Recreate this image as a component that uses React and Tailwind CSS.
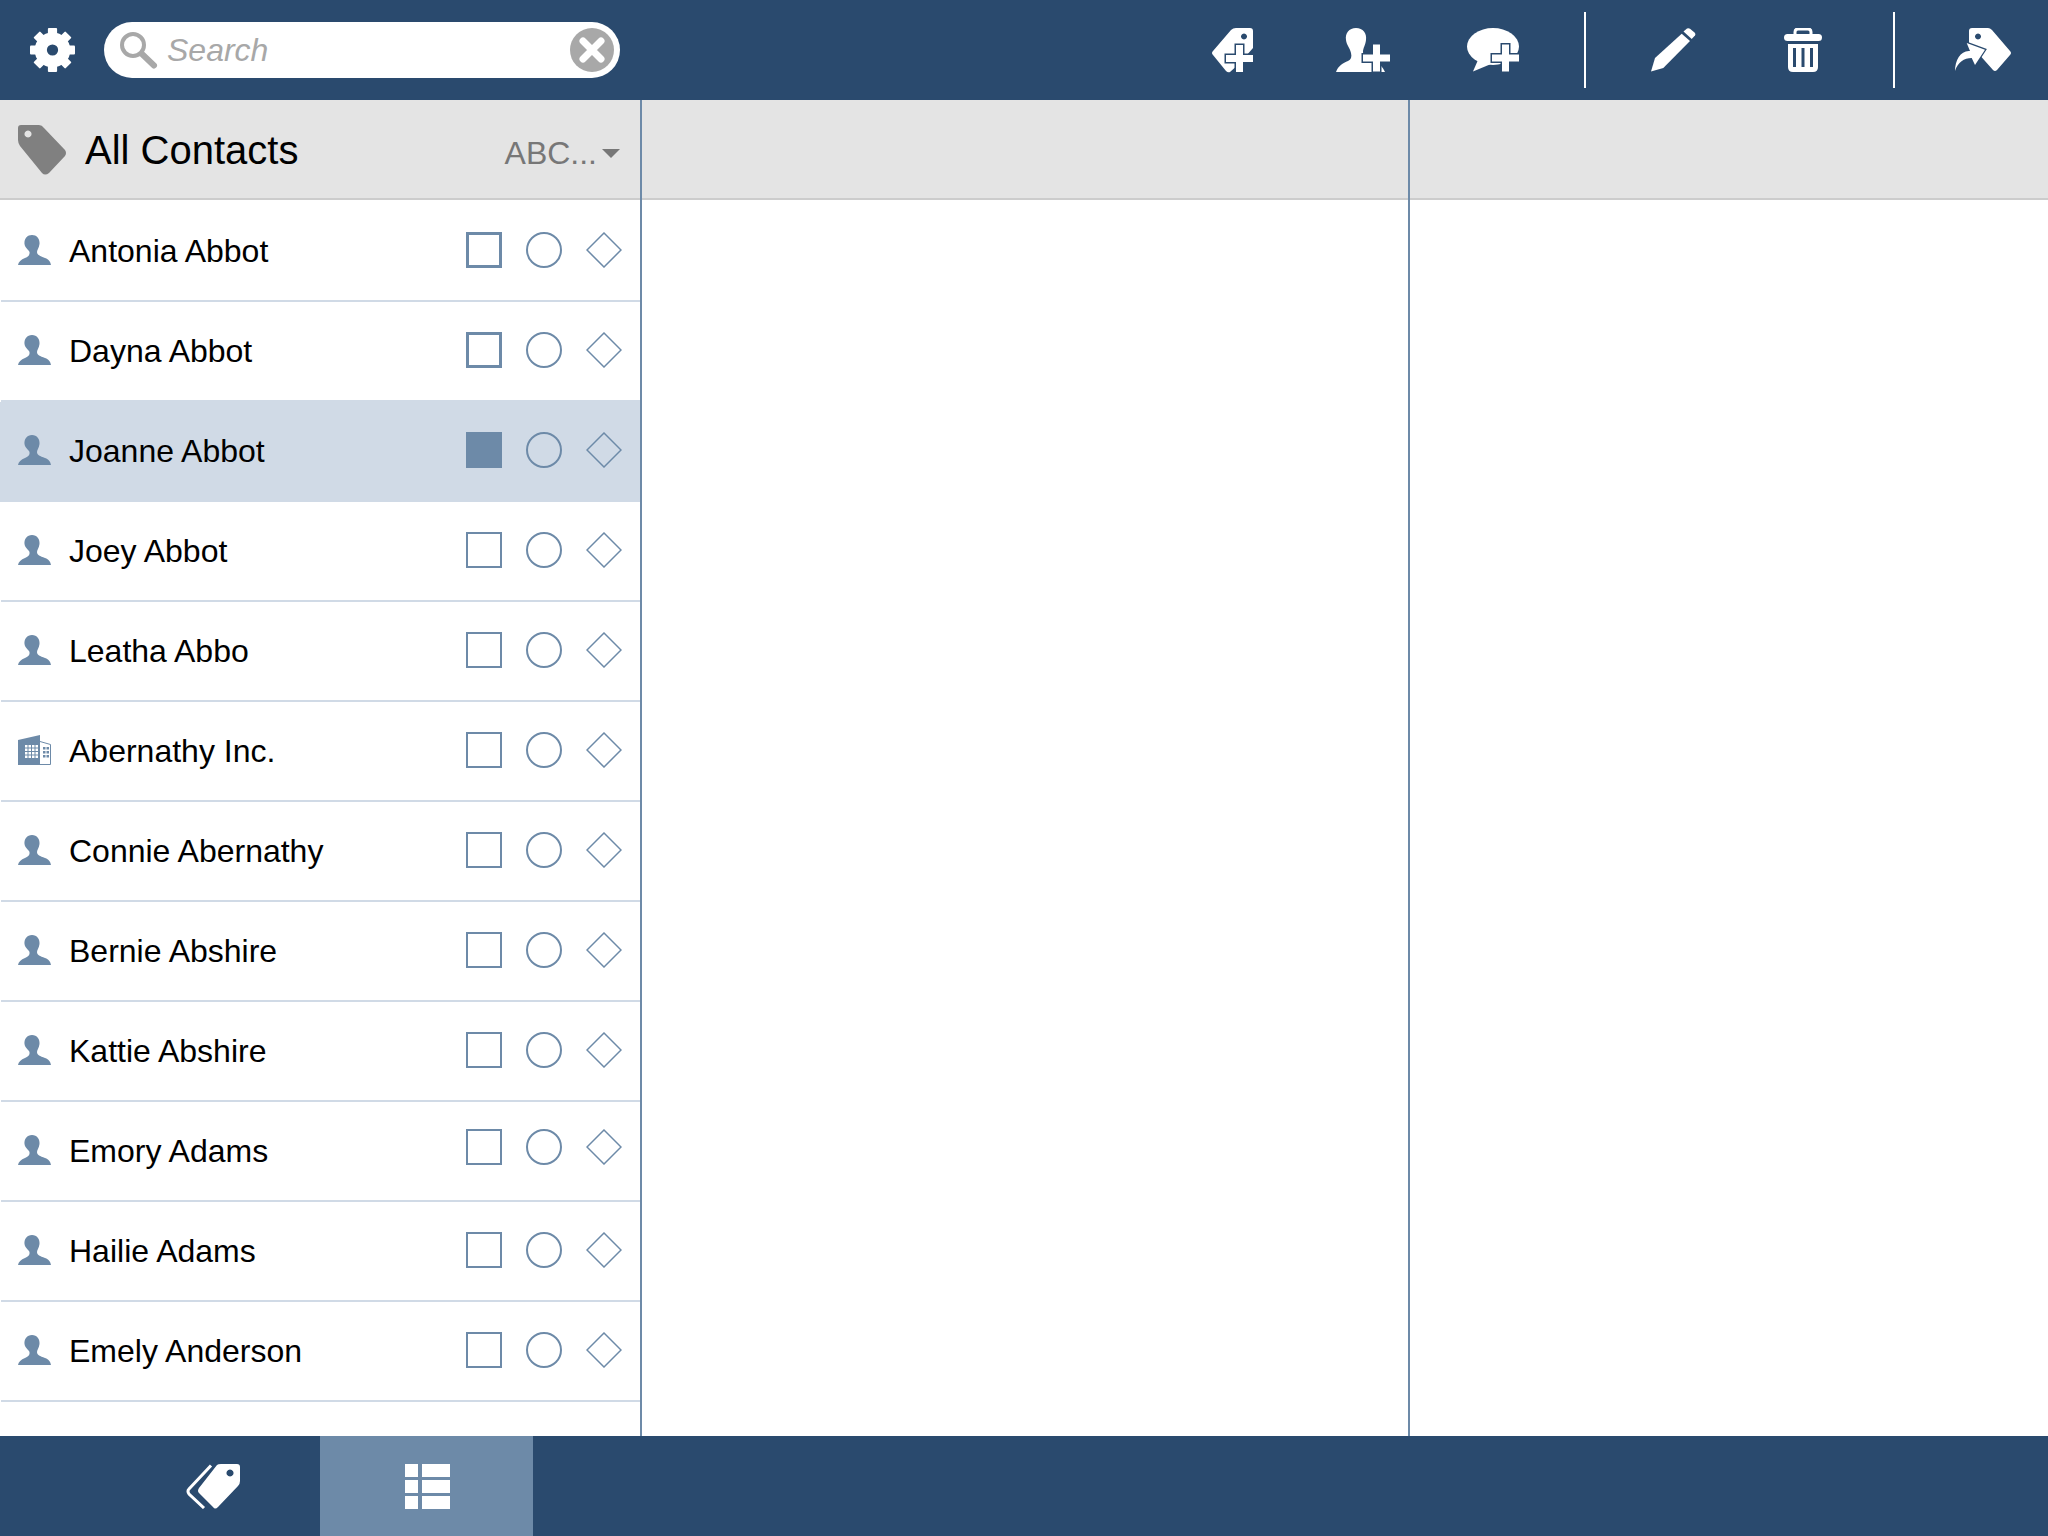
const NAVY = '#2a4a6e';

const contacts = [
  { name: 'Antonia Abbot', boxClass: 'border-[3px]' },
  { name: 'Dayna Abbot', boxClass: 'border-[3px]' },
  { name: 'Joanne Abbot', selected: true },
  { name: 'Joey Abbot' },
  { name: 'Leatha Abbo' },
  { name: 'Abernathy Inc.', company: true },
  { name: 'Connie Abernathy' },
  { name: 'Bernie Abshire' },
  { name: 'Kattie Abshire' },
  { name: 'Emory Adams', raised: true },
  { name: 'Hailie Adams' },
  { name: 'Emely Anderson' },
];

const PlusMark = ({ cx, cy }) => (
  <path
    d={`M${cx - 3.5} ${cy - 13.5}h7v10h10v7h-10v10h-7v-10h-10v-7h10z`}
    fill="#fff"
    stroke={NAVY}
    strokeWidth="3"
    paintOrder="stroke"
  />
);

const GearIcon = () => (
  <svg width="45" height="44" viewBox="0 0 44 44" fill="#fff" className="shrink-0" preserveAspectRatio="none">
    <circle cx="22" cy="22" r="11.5" fill="none" stroke="#fff" strokeWidth="12" />
    {[0, 45, 90, 135, 180, 225, 270, 315].map((deg) => (
      <rect key={deg} x="17.5" y="0" width="9" height="10" rx="1" transform={`rotate(${deg} 22 22)`} />
    ))}
  </svg>
);

const SearchGlass = () => (
  <svg width="38" height="37" viewBox="0 0 38 37" fill="none" stroke="#a8a8a8" className="shrink-0">
    <circle cx="13" cy="13" r="11" strokeWidth="4" />
    <path d="M22 22 L34 33.5" strokeWidth="6" strokeLinecap="round" />
  </svg>
);

const ClearIcon = () => (
  <svg width="44" height="44" viewBox="0 0 44 44" className="shrink-0">
    <circle cx="22" cy="22" r="22" fill="#a8a8a8" />
    <path d="M13 13 L31 31 M31 13 L13 31" stroke="#fff" strokeWidth="7" strokeLinecap="round" />
  </svg>
);

const TagAddIcon = () => (
  <svg width="43" height="45" viewBox="0 0 43 45" className="shrink-0">
    <path
      fillRule="evenodd"
      fill="#fff"
      d="M20 2Q22 0 25 0H39Q42 0 42 3V20L28 36L19 44Q17 45 15 43L2 27Q0 25 2 23ZM33 5.5a3 3 0 1 0 .01 0Z"
    />
    <PlusMark cx={28.5} cy={30.5} />
  </svg>
);

const PersonAddIcon = () => (
  <svg width="54" height="45" viewBox="0 0 54 45" className="shrink-0">
    <path
      fill="#fff"
      d="M20 0C27 0 31 5 30 12C29.5 17 27 20 27 24C27 28 31 30 36 32C42 34 47 39 49 44H0C2 38 7 35 12 33C15 31.5 16 29 15 25C14 20 10.5 17 10 12C9 5 13 0 20 0Z"
    />
    <PlusMark cx={40.5} cy={30} />
  </svg>
);

const ChatAddIcon = () => (
  <svg width="52" height="45" viewBox="0 0 52 45" className="shrink-0">
    <ellipse cx="26" cy="18.5" rx="26" ry="18.5" fill="#fff" />
    <path d="M11 32L6 43.5L24 36Z" fill="#fff" />
    <PlusMark cx={38.5} cy={30} />
  </svg>
);

const PencilIcon = () => (
  <svg width="45" height="44" viewBox="0 0 45 44" fill="#fff" className="shrink-0">
    <path d="M0 43.5L4 30L30.7 5.7L39 13L12.3 40Z" />
    <path d="M32.5 3.5L36 .5Q37.5-.3 39 .7L43.5 4.5Q45 6 44 7.5L40.7 11Z" />
  </svg>
);

const TrashIcon = () => (
  <svg width="38" height="44" viewBox="0 0 38 44" className="shrink-0">
    <path d="M11 7V4Q11 1 14 1H24Q27 1 27 4V7" fill="none" stroke="#fff" strokeWidth="3" />
    <rect x="0" y="6" width="38" height="7" rx="3.5" fill="#fff" />
    <path d="M4 16H34V39Q34 44 29 44H9Q4 44 4 39Z" fill="#fff" />
    <rect x="9" y="20" width="3" height="19" fill={NAVY} />
    <rect x="17.5" y="20" width="3" height="19" fill={NAVY} />
    <rect x="26" y="20" width="3" height="19" fill={NAVY} />
  </svg>
);

const TagShareIcon = () => (
  <svg width="57" height="44" viewBox="0 0 57 44" className="shrink-0">
    <path
      fillRule="evenodd"
      fill="#fff"
      d="M14 3Q14 0 17 0H33Q35 0 37 2L55 23Q57 25 55 27L42 42Q40 44 38 42L22 24L14 18ZM23 5.5a3 3 0 1 0 .01 0Z"
    />
    <path
      d="M0 43C0 32 6 22 15 23L11.7 15L30 21.7L20 37L16.7 30C9 30 3 34 0 43Z"
      fill="#fff"
      stroke={NAVY}
      strokeWidth="2.5"
      paintOrder="stroke"
    />
  </svg>
);

const LabelTagIcon = () => (
  <svg width="48" height="51" viewBox="0 0 48 51" className="shrink-0">
    <path
      fillRule="evenodd"
      fill="#808080"
      d="M3 1H21Q24 1 26 4L47 26Q49 29 47 32L31 49Q27 52 24 49L2 22Q0 19 0 16V4Q0 1 3 1ZM10 6.5a3.5 3.5 0 1 0 .01 0Z"
    />
  </svg>
);

const PersonIcon = () => (
  <svg width="33" height="30" viewBox="0 0 33 30" fill="#6d8aa8" className="-mt-0.5 shrink-0">
    <path d="M14 0C19 0 22 4 21.5 9C21 13 19 15 19 17C19 20 22 21 27 23C31 24.5 32.5 27 33 30H0C.5 27 3 24.5 7 23C10.5 21.5 12 20 11.5 17C11 15 7 13 6.5 9C6 4 9 0 14 0Z" />
  </svg>
);

const BuildingIcon = () => (
  <svg width="33" height="30" viewBox="0 0 33 30" className="-mt-0.5 shrink-0">
    <path d="M0 5L22 0V30H0Z" fill="#6d8aa8" />
    <path d="M22 6.5L32.5 9.5V29.5H22" fill="none" stroke="#6d8aa8" />
    {[10, 13.5, 17, 20.5].map((y) =>
      [7, 10.5, 14, 17.5].map((x) => <rect key={`${x}-${y}`} x={x} y={y} width="2.5" height="2.5" fill="#fff" />)
    )}
    {[12, 16, 20].map((y) =>
      [25, 28.5].map((x) => <rect key={`${x}-${y}`} x={x} y={y} width="2.5" height="2.5" fill="#6d8aa8" />)
    )}
  </svg>
);

const BottomTagsIcon = () => (
  <svg width="54" height="45" viewBox="0 0 54 45" className="shrink-0">
    <path d="M25 1.5L3 25Q1 27 3 30L18 44" fill="none" stroke="#fff" strokeWidth="3" />
    <path
      fillRule="evenodd"
      fill="#fff"
      d="M31 1Q32 0 35 0H51Q54 0 54 3V17Q54 20 52 22L32 43Q29 46 27 43L13 29Q11 27 13 24ZM44 5.5a3.5 3.5 0 1 0 .01 0Z"
    />
  </svg>
);

const DiamondIcon = () => (
  <svg width="36" height="36" viewBox="0 0 36 36" fill="none" stroke="#6d8aa8" strokeWidth="1.5" className="shrink-0">
    <path d="M18 1L35 18L18 35L1 18Z" />
  </svg>
);

const ToolbarDivider = () => <div className="h-[76px] w-0.5 bg-white" />;

const ContactRow = ({ contact }) => (
  <div className={contact.selected ? 'bg-[#d0dae6]' : ''}>
    <div className="ml-px flex h-[100px] items-center border-b-2 border-[#d0dae6] pl-[17px] pr-[18px]">
      {contact.company ? <BuildingIcon /> : <PersonIcon />}
      <span className="ml-[18px] flex-1 text-[32px] text-black">{contact.name}</span>
      <div className={`flex items-center gap-6 ${contact.raised ? '-mt-2' : '-mt-0.5'}`}>
        <div
          className={`h-9 w-9 ${contact.selected ? 'bg-[#6d8aa8]' : `border-[#6d8aa8] ${contact.boxClass || 'border-2'}`}`}
        />
        <div className="h-9 w-9 rounded-full border-2 border-[#6d8aa8]" />
        <DiamondIcon />
      </div>
    </div>
  </div>
);

export default function App() {
  return (
    <div className="flex h-screen w-full flex-col overflow-hidden bg-white font-['Liberation_Sans',Arial,sans-serif]">
      {/* Top toolbar */}
      <div className="flex h-[100px] shrink-0 items-center bg-[#2a4a6e] pl-[30px]">
        <GearIcon />
        <div className="ml-[29px] flex h-14 w-[516px] items-center rounded-full bg-white pl-4 pr-[6px]">
          <SearchGlass />
          <span className="ml-[9px] flex-1 text-[32px] italic text-[#a8a8a8]">Search</span>
          <ClearIcon />
        </div>
        <div className="ml-[591px]"><TagAddIcon /></div>
        <div className="ml-[82px]"><PersonAddIcon /></div>
        <div className="ml-[77px]"><ChatAddIcon /></div>
        <div className="ml-[65px]"><ToolbarDivider /></div>
        <div className="ml-[65px]"><PencilIcon /></div>
        <div className="ml-[88px]"><TrashIcon /></div>
        <div className="ml-[71px]"><ToolbarDivider /></div>
        <div className="ml-[60px]"><TagShareIcon /></div>
      </div>

      {/* Columns */}
      <div className="flex min-h-0 flex-1">
        <div className="w-[642px] shrink-0 border-r-2 border-[#6d8aa8]">
          <div className="flex h-[100px] items-center border-b-2 border-[#cccccc] bg-[#e4e4e4] pl-[18px] pr-5">
            <LabelTagIcon />
            <span className="ml-[19px] mt-0.5 flex-1 text-[40px] text-black">All Contacts</span>
            <span className="mt-2 text-[32px] text-[#777777]">ABC...</span>
            <div className="ml-[5px] mt-2 h-0 w-0 border-x-[9px] border-t-[9px] border-x-transparent border-t-[#777777]" />
          </div>
          <div className="pt-0.5">
            {contacts.map((contact) => (
              <ContactRow key={contact.name} contact={contact} />
            ))}
          </div>
        </div>
        <div className="w-[768px] shrink-0 border-r-2 border-[#6d8aa8]">
          <div className="h-[100px] border-b-2 border-[#cccccc] bg-[#e4e4e4]" />
        </div>
        <div className="flex-1">
          <div className="h-[100px] border-b-2 border-[#cccccc] bg-[#e4e4e4]" />
        </div>
      </div>

      {/* Bottom tabs */}
      <div className="flex h-[100px] shrink-0 bg-[#2a4a6e]">
        <div className="flex w-[320px] items-center justify-center pl-[106px]">
          <BottomTagsIcon />
        </div>
        <div className="flex w-[213px] items-center justify-center bg-[#6d8aa8]">
          <div className="ml-px grid grid-cols-[13px_28px] gap-x-1 gap-y-[3px]">
            {[0, 1, 2].map((row) => (
              <div key={row} className="contents">
                <div className="h-[13px] bg-white" />
                <div className="h-[13px] bg-white" />
              </div>
            ))}
          </div>
        </div>
      </div>
    </div>
  );
}
